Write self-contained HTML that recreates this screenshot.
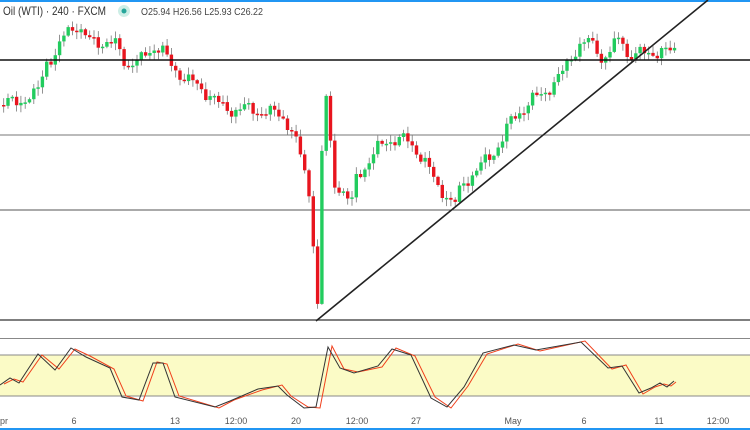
<!DOCTYPE html>
<html><head><meta charset="utf-8"><style>
html,body{margin:0;padding:0;background:#fff;width:750px;height:430px;overflow:hidden;font-family:"Liberation Sans",sans-serif}
svg{position:absolute;left:0;top:0}
</style></head><body>
<svg id="s" width="750" height="430" viewBox="0 0 750 430">
<rect x="0" y="0" width="750" height="2" fill="#2196f3"/>
<rect x="0" y="428" width="750" height="2" fill="#2196f3"/>
<line x1="0" y1="135" x2="750" y2="135" stroke="#777" stroke-width="1"/>
<line x1="0" y1="210" x2="750" y2="210" stroke="#555" stroke-width="1"/>
<line x1="0" y1="320" x2="750" y2="320" stroke="#333" stroke-width="1.2"/>
<g id="c"></g>
<line x1="0" y1="60" x2="750" y2="60" stroke="#111" stroke-width="1.6"/>
<line x1="316" y1="321" x2="708" y2="0" stroke="#222" stroke-width="1.6"/>
<rect x="0" y="338" width="750" height="1" fill="#888"/>
<rect x="0" y="355" width="750" height="41" fill="#fbfbc6"/>
<line x1="0" y1="355" x2="750" y2="355" stroke="#888"/>
<line x1="0" y1="396" x2="750" y2="396" stroke="#888"/>
<polyline id="red" fill="none" stroke="#f0401c" stroke-width="1"/>
<polyline id="blk" fill="none" stroke="#333" stroke-width="1"/>
<g font-size="9" fill="#555" text-anchor="middle">
<text x="4" y="424">pr</text><text x="74" y="424">6</text><text x="175" y="424">13</text><text x="236" y="424">12:00</text><text x="296" y="424">20</text><text x="357" y="424">12:00</text><text x="416" y="424">27</text><text x="513" y="424">May</text><text x="584" y="424">6</text><text x="659" y="424">11</text><text x="718" y="424">12:00</text>
</g>
<text x="3" y="15" font-size="12" fill="#333" textLength="103" lengthAdjust="spacingAndGlyphs">Oil (WTI) · 240 · FXCM</text>
<circle cx="124" cy="11" r="6" fill="#cdeee6"/><circle cx="124" cy="11" r="2.5" fill="#26a69a"/>
<text x="141" y="15" font-size="10.5" fill="#444" textLength="122" lengthAdjust="spacingAndGlyphs">O25.94  H26.56  L25.93  C26.22</text>
</svg>
<script>
(function(){
var NS='http://www.w3.org/2000/svg';
var W=[[0,105],[20,100],[35,95],[45,60],[55,55],[65,30],[75,25],[85,40],[100,42],[115,45],[125,65],[140,60],[150,48],[160,47],[165,60],[175,72],[185,78],[200,90],[210,95],[220,108],[230,110],[240,108],[250,110],[265,112],[280,115],[290,130],[300,160],[305,180],[310,210],[315,300],[318,318],[321,95],[326,100],[331,180],[340,190],[350,205],[355,175],[365,165],[375,150],[385,140],[395,140],[405,140],[415,150],[425,165],[435,185],[445,195],[452,208],[460,185],[470,175],[480,165],[490,155],[500,140],[510,120],[520,110],[530,100],[540,95],[550,85],[560,75],[570,55],[578,45],[585,42],[595,47],[600,60],[610,50],[620,35],[625,55],[635,55],[650,52],[670,52],[675,48]];
function f(x){for(var i=1;i<W.length;i++){if(x<=W[i][0]){var a=W[i-1],b=W[i];return a[1]+(b[1]-a[1])*(x-a[0])/(b[0]-a[0]);}}return W[W.length-1][1];}
function el(t,o,p){var e=document.createElementNS(NS,t);for(var k in o)e.setAttribute(k,o[k]);p.appendChild(e);}
var g=document.getElementById('c'),prev=f(0);
for(var x=2;x<=675;x+=4.3){var cl=f(x)+Math.sin(x*1.7)*5+Math.sin(x*0.53)*3;var op=prev;var bt=Math.min(op,cl),bb=Math.max(op,cl);if(bb-bt<1.5)bb=bt+1.5;var up=cl<op;var col=up?'#22cc5e':'#e8151e';
var wt=bt-1-Math.abs(Math.sin(x*0.9))*6,wb=bb+1+Math.abs(Math.cos(x*1.3))*6;
el('line',{x1:(x+1.7).toFixed(1),y1:wt.toFixed(1),x2:(x+1.7).toFixed(1),y2:wb.toFixed(1),stroke:'#777','stroke-width':'0.8'},g);
el('rect',{x:x.toFixed(1),y:bt.toFixed(1),width:'3.4',height:(bb-bt).toFixed(1),fill:col},g);prev=cl;}
var B=[[0,385],[10,378],[19,383],[38,354],[55,370],[71,348],[86,357],[110,368],[122,397],[139,400],[153,363],[163,363],[175,397],[215,407],[230,401],[258,389],[278,386],[287,395],[304,408],[316,407],[328,347],[340,368],[354,373],[378,366],[392,349],[411,355],[431,398],[447,407],[464,387],[483,353],[514,345],[536,350],[581,342],[608,368],[622,366],[639,393],[651,388],[660,383],[667,387],[674,381]];
document.getElementById('blk').setAttribute('points',B.map(function(p){return p[0]+','+p[1]}).join(' '));
document.getElementById('red').setAttribute('points',B.map(function(p,i){return Math.min(p[0]+4,676)+','+(p[1]+(i%2?1:-1))}).join(' '));
})();
</script>
</body></html>
